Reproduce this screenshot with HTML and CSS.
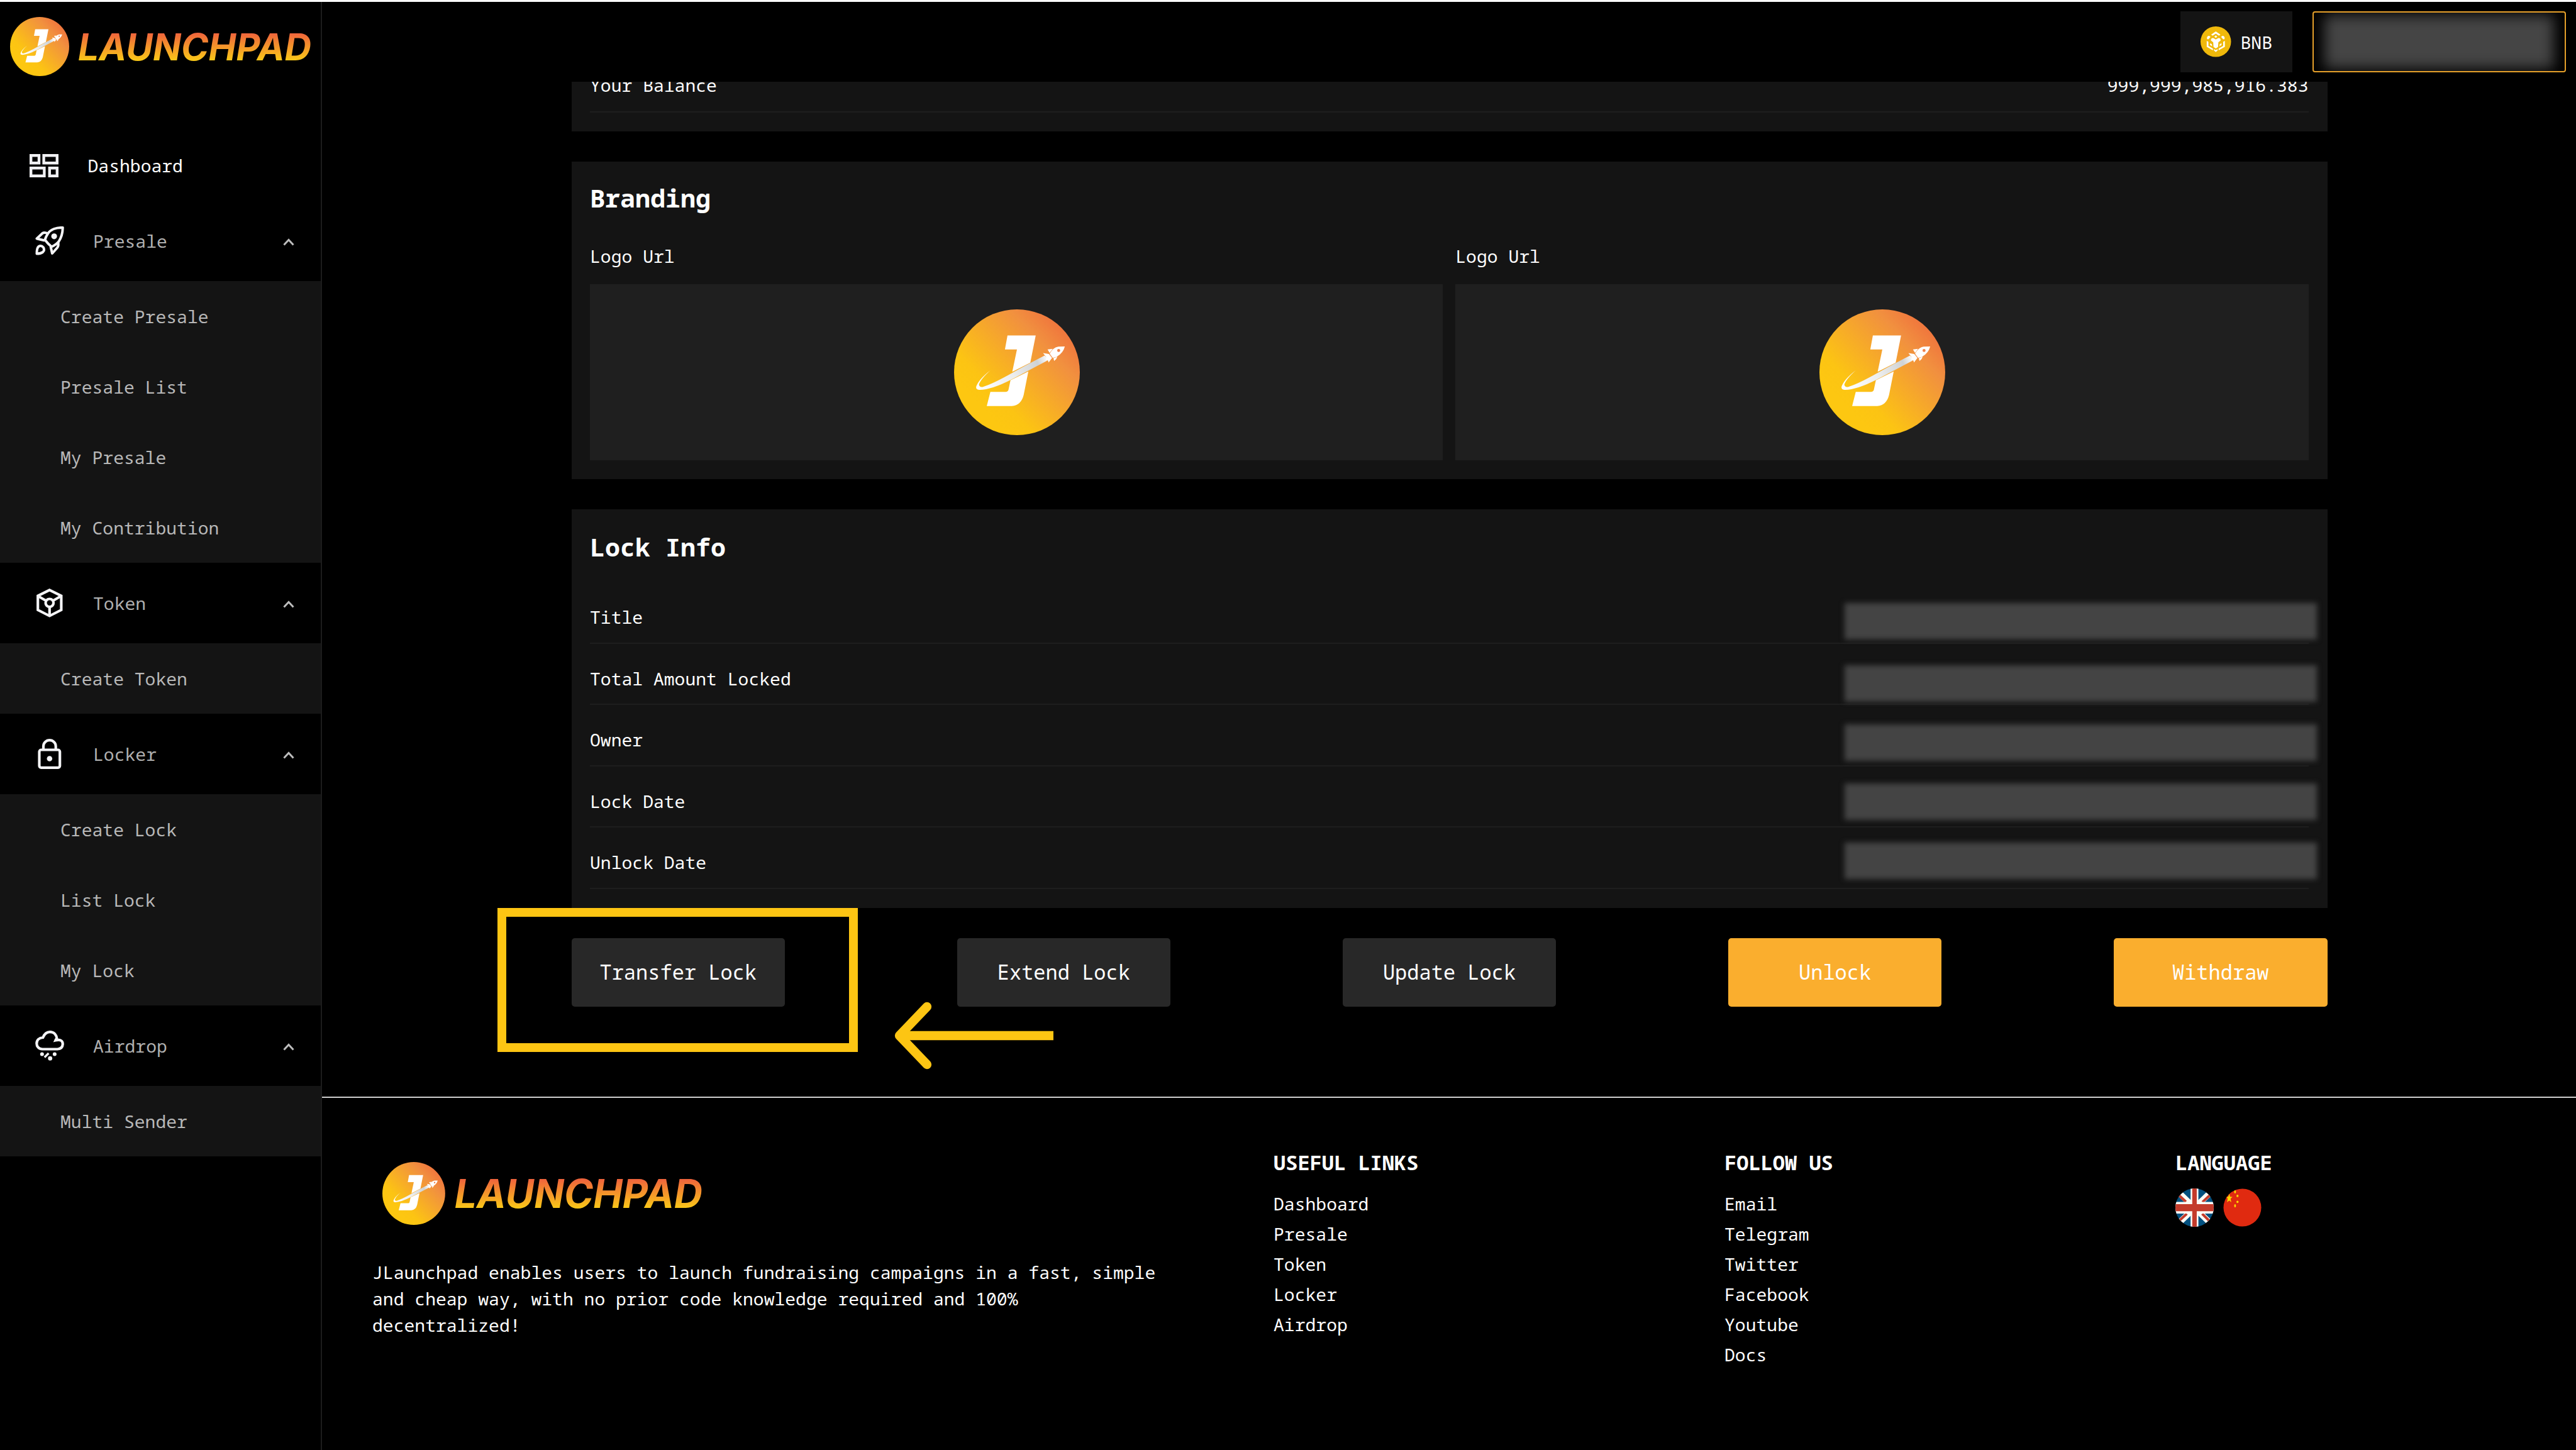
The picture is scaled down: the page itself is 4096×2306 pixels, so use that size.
FILE: index.html
```html
<!DOCTYPE html>
<html lang="en">
<head>
<meta charset="utf-8">
<title>JLaunchpad - Lock Info</title>
<link rel="stylesheet" href="styles.css">
</head>
<body>
<svg class="defs" width="0" height="0" aria-hidden="true">
  <defs>
    <linearGradient id="coin" gradientUnits="userSpaceOnUse" x1="290" y1="760" x2="830" y2="250">
      <stop offset="0" stop-color="#fdc711"/><stop offset=".18" stop-color="#fcc413"/><stop offset=".8" stop-color="#f1903f"/><stop offset="1" stop-color="#f0783d"/>
    </linearGradient>
    <linearGradient id="trail" gradientUnits="userSpaceOnUse" x1="240" y1="600" x2="710" y2="400">
      <stop offset="0" stop-color="#fff"/><stop offset=".5" stop-color="#eceded"/><stop offset=".85" stop-color="#cfd2d4"/><stop offset="1" stop-color="#fff"/>
    </linearGradient>
    <linearGradient id="word" gradientUnits="userSpaceOnUse" x1="0" y1="26" x2="0" y2="69">
      <stop offset="0" stop-color="#ef643c"/><stop offset="1" stop-color="#fac818"/>
    </linearGradient>
    <symbol id="mark" viewBox="85 80 838 838">
      <circle cx="504" cy="499" r="419" fill="url(#coin)"/>
      <path fill="#fff" d="M441 254H629L593 435L473 496L504 347H424ZM461 552L580 494L549 650Q532 720 470 724H303L327 630H428Q444 630 448 614Z"/>
      <path fill="url(#trail)" d="M327 486Q246 548 232 597Q231 614 252 616Q330 618 470 546L702 424L712 410L688 388Q600 433 473 503Q340 578 275 597Q252 600 251 580Q262 545 327 486Z"/>
      <path fill="#fff" d="M823 327Q812 372 768 396L742 404L722 376Q742 335 780 328ZM708 347L742 343L722 370ZM747 406L773 395Q770 410 752 424ZM678 371L717 377L738 404L715 434L711 421L697 417L700 399Z"/>
      <circle cx="782" cy="354" r="10" fill="#f0814a"/>
      <path d="M720 376L742 405" stroke="#f0955a" stroke-width="4"/>
    </symbol>
    <symbol id="chevron" viewBox="0 0 18 12"><path d="M1.5 10.5L9 2.5L16.500 10.5" fill="none" stroke="#bdbdbd" stroke-width="3"/></symbol>
  </defs>
</svg>

<div class="app">
  <aside class="sidebar">
    <div class="sidebar-logo">
      <svg class="logo" viewBox="0 0 480 94">
        <use href="#mark" width="94" height="94"/>
        <text class="wordmark" x="108" y="69" textLength="371" lengthAdjust="spacingAndGlyphs">LAUNCHPAD</text>
      </svg>
    </div>
    <nav>
      <a class="nav-top">
        <svg width="46" height="37" viewBox="0 0 46 37"><g fill="none" stroke="#f0f0f3" stroke-width="4.400"><path d="M2.200 2.200H15V14.300H2.200ZM22.600 2.200H43.800V14.300H22.600ZM2.200 22.200H23.400V34.800H2.200ZM31.800 22.200H43.800V34.800H31.800Z"/></g></svg>
        <span>Dashboard</span>
      </a>
      <div class="nav-head">
        <svg class="ico" viewBox="-0.500 0 46 46"><g fill="none" stroke="#f4f4f6" stroke-width="4" stroke-linejoin="round"><path d="M43.300 2C33 1.600 24 5 20 11Q16 17 15 21.500Q20 28 25.500 32.500Q33 29 37 24Q43 15 43.300 2Z"/><path d="M20 11.500Q14 9 11 11L2 19.500L14.500 22.500"/><path d="M36 25.500Q37 31 34.500 34L26.500 43L24 32"/><path d="M2 43.500Q2 34 5 32Q9 29.500 12.500 33.500Q15 38 11.500 41Q8 43.500 2 43.500Z"/></g><circle cx="29.600" cy="15.800" r="4.600" fill="#f4f4f6"/></svg>
        <span>Presale</span><svg class="chev"><use href="#chevron"/></svg>
      </div>
      <ul><li>Create Presale</li><li>Presale List</li><li>My Presale</li><li>My Contribution</li></ul>
      <div class="nav-head">
        <svg class="ico" viewBox="-2 0 46 46"><g fill="none" stroke="#f4f4f6" stroke-width="4.200"><path d="M20.800 2.300L39.400 11.600V34L20.800 43.500L2.200 34V11.600Z"/><circle cx="20.800" cy="22.800" r="6.300"/><path d="M2.500 12L15.500 19.500M39 12L26 19.500M20.800 29V43"/></g></svg>
        <span>Token</span><svg class="chev"><use href="#chevron"/></svg>
      </div>
      <ul><li>Create Token</li></ul>
      <div class="nav-head">
        <svg class="ico tall" viewBox="-4.500 0 46 48"><g fill="none" stroke="#f4f4f6" stroke-width="4.200"><rect x="2" y="17.500" width="32.700" height="28.300" rx="3"/><path d="M8.500 17V11.700A9.850 9.600 0 0 1 28.200 11.700V17"/></g><circle cx="18.300" cy="31.500" r="4.300" fill="#f4f4f6"/></svg>
        <span>Locker</span><svg class="chev"><use href="#chevron"/></svg>
      </div>
      <ul><li>Create Lock</li><li>List Lock</li><li>My Lock</li></ul>
      <div class="nav-head">
        <svg class="ico tall" viewBox="-0.300 0 46 48"><path fill="none" stroke="#f4f4f6" stroke-width="4.200" d="M11 29.500C5 29 2 25 2 20.500C2 15 6 11.500 12 11C14.500 5 18 2.200 23 2.200C29.500 2.200 33.500 6.500 34.200 13.500Q33 13.200 32 15.500Q43.500 13 43.500 21.500Q43 29 35 29.500Z"/><g fill="#f4f4f6"><circle cx="10.500" cy="37.400" r="3"/><circle cx="30.600" cy="37.400" r="3"/><circle cx="23.400" cy="44.200" r="3.400"/></g><path d="M14.500 42.500L21 36" stroke="#f4f4f6" stroke-width="3.400"/></svg>
        <span>Airdrop</span><svg class="chev"><use href="#chevron"/></svg>
      </div>
      <ul><li>Multi Sender</li></ul>
    </nav>
  </aside>

  <div class="main">
    <header class="topbar">
      <div class="chain">
        <svg width="48.500" height="48.500" viewBox="49 56 202 202"><circle cx="150" cy="157" r="101" fill="#f0b90b"/>
          <g fill="#fff"><path d="M119 110L150 89L181 110L171 117L150 104L129 117Z"/><path d="M150 115L160 124L150 132L140 124Z"/><path d="M92 140V127Q97 117 108 119L115 126L101 141ZM208 140V127Q203 117 192 119L185 126L199 141Z"/><path d="M118 143Q121 131 133 133L150 142L167 133Q179 131 182 143V150L167 161L165 192L150 202L135 192L133 161L118 150Z"/><path d="M90 152L101 158V185L131 203V214L90 191ZM210 152L199 158V185L169 203V214L210 191Z"/><path d="M112 167L124 174L126 188L112 179ZM188 167L176 174L174 188L188 179Z"/><path d="M138 206L150 213L162 206V215L150 226L138 215Z"/></g></svg>
        <span>BNB</span>
      </div>
      <div class="wallet"><i></i></div>
    </header>

    <div class="viewport">
      <main class="content">
        <section class="card balance">
          <div class="row"><span>Your Balance</span><span>999,999,985,916.383</span></div>
        </section>

        <section class="card branding">
          <h2>Branding</h2>
          <div class="logos">
            <div><label>Logo Url</label><div class="logo-box"><svg width="200" height="200"><use href="#mark"/></svg></div></div>
            <div><label>Logo Url</label><div class="logo-box"><svg width="200" height="200"><use href="#mark"/></svg></div></div>
          </div>
        </section>

        <section class="card lock">
          <h2>Lock Info</h2>
          <div class="rows">
            <div class="row"><span>Title</span><i class="masked"></i></div>
            <div class="row"><span>Total Amount Locked</span><i class="masked"></i></div>
            <div class="row"><span>Owner</span><i class="masked"></i></div>
            <div class="row"><span>Lock Date</span><i class="masked"></i></div>
            <div class="row"><span>Unlock Date</span><i class="masked"></i></div>
          </div>
        </section>

        <div class="actions">
          <button>Transfer Lock</button>
          <button>Extend Lock</button>
          <button>Update Lock</button>
          <button class="primary">Unlock</button>
          <button class="primary">Withdraw</button>
          <div class="highlight"></div>
          <svg class="arrow" width="254" height="108" viewBox="0 0 254 108"><path d="M53 8L9 54L53 100" fill="none" stroke="#fdc513" stroke-width="14.300" stroke-linecap="round" stroke-linejoin="round"/><path d="M9 54H254" stroke="#fdc513" stroke-width="14.300"/></svg>
        </div>
      </main>

      <footer>
        <div class="about">
          <svg class="logo" viewBox="0 0 480 94">
            <use href="#mark" width="94" height="94"/>
            <text class="wordmark" x="108" y="69" textLength="371" lengthAdjust="spacingAndGlyphs">LAUNCHPAD</text>
          </svg>
          <p>JLaunchpad enables users to launch fundraising campaigns in a fast, simple and cheap way, with no prior code knowledge required and 100% decentralized!</p>
        </div>
        <div class="col"><h3>USEFUL LINKS</h3><a>Dashboard</a><a>Presale</a><a>Token</a><a>Locker</a><a>Airdrop</a></div>
        <div class="col"><h3>FOLLOW US</h3><a>Email</a><a>Telegram</a><a>Twitter</a><a>Facebook</a><a>Youtube</a><a>Docs</a></div>
        <div class="col"><h3>LANGUAGE</h3>
          <div class="flags">
            <svg width="61" height="61" viewBox="0 0 255 255"><clipPath id="round"><circle cx="127.500" cy="127.500" r="127.500"/></clipPath>
              <g clip-path="url(#round)"><path fill="#03507f" d="M0 0H255V255H0Z"/>
              <path d="M10 15L245 243M245 15L10 243" stroke="#fdfcf6" stroke-width="40"/>
              <path d="M20 42L70 89M235 40L180 91M20 220L76 168M235 225L178 168" stroke="#c43b2b" stroke-width="17"/>
              <path fill="#fdfcf6" d="M101 0H153V255H101ZM0 90H255V167H0Z"/>
              <path fill="#c43b2b" d="M112 0H142V255H112ZM0 105H255V152H0Z"/></g></svg>
            <svg width="61" height="61" viewBox="0 0 255 255"><circle cx="127.500" cy="127.500" r="125.500" fill="#e02a10"/>
              <g fill="#fcd500"><path d="M40 36L46 55L62 56L49 68L54 92L40 80L26 92L30 68L22 58L34 55Z"/><ellipse cx="79" cy="23" rx="6" ry="10"/><ellipse cx="95" cy="50" rx="7" ry="8"/><ellipse cx="95" cy="89" rx="7" ry="8"/><ellipse cx="79" cy="115" rx="6" ry="11"/></g></svg>
          </div>
        </div>
      </footer>
    </div>
  </div>
</div>
</body>
</html>
```
FILE: styles.css
```css
* { box-sizing: border-box; }

body {
  margin: 0;
  background: #000;
  color: #fff;
  font: 28.05px/42px "Noto Sans Mono", "DejaVu Sans Mono", monospace;
}

svg { display: block; flex: none; }
.defs { position: absolute; }
h2, h3, p, ul { margin: 0; padding: 0; }
ul { list-style: none; }

.app {
  display: flex;
  width: 4096px;
  height: 2306px;
  overflow: hidden;
  border-top: 3px solid #fff;
}

/* Sidebar */
.sidebar {
  flex: none;
  width: 512px;
  border-right: 2px solid #1c1c1c;
}
.sidebar-logo {
  height: 204px;
  padding: 24px 0 0 16px;
}
.sidebar-logo .logo { width: 480px; height: 94px; }
.wordmark {
  font: italic 700 59px Inter, sans-serif;
  fill: url(#word);
}
.nav-top {
  display: flex;
  align-items: center;
  gap: 46.5px;
  height: 112px;
  padding-left: 47px;
}
.nav-head {
  display: flex;
  align-items: center;
  height: 128px;
  padding: 0 42px 0 56px;
  color: #b0b0b0;
}
.nav-head span { flex: 1; margin-left: 46px; }
.ico { width: 46px; height: 46px; }
.ico.tall { height: 48px; }
.chev { width: 18px; height: 12px; margin-top: 3px; }
.nav-head + ul { background: #141414; }
.nav-head + ul li {
  height: 112px;
  padding-left: 96px;
  line-height: 112px;
  color: #b8b8b8;
}

/* Top bar */
.main { flex: 1; min-width: 0; }
.topbar {
  display: flex;
  justify-content: flex-end;
  gap: 32px;
  height: 127px;
  padding: 15px 16px 0 0;
}
.chain {
  display: flex;
  align-items: center;
  gap: 15px;
  width: 178px;
  height: 97px;
  padding-left: 32px;
  background: #141414;
}
.wallet {
  position: relative;
  width: 403px;
  height: 97px;
  border: 2px solid #e6a02a;
  border-radius: 4px;
  overflow: hidden;
}
.wallet i {
  position: absolute;
  inset: 4px 17px;
  background: #454545;
  filter: blur(11px);
}

/* Scrolled page */
.viewport { height: 2176px; overflow: hidden; }
.content {
  display: flex;
  flex-direction: column;
  gap: 48px;
  width: 2792px;
  margin-left: 396.5px;
}
.card {
  padding: 28px 30px 30px 29.5px;
  background: #141414;
}
.card h2 { font-size: 40px; line-height: 60px; }
.row {
  position: relative;
  display: flex;
  justify-content: space-between;
  height: 97.5px;
  padding-top: 34px;
  border-bottom: 2px solid #1e1e1e;
}
.balance {
  display: flow-root;
  height: 78.5px;
  padding-top: 0;
  overflow: hidden;
}
.balance .row { margin-top: -49px; padding-top: 33px; }
.branding { height: 505.5px; }
.logos {
  display: grid;
  grid-template-columns: 1fr 1fr;
  gap: 20px;
  margin-top: 41.5px;
}
.logos label { display: block; }
.logo-box {
  display: flex;
  align-items: center;
  justify-content: center;
  height: 279.5px;
  margin-top: 24px;
  padding-left: 1px;
  background: #1f1f1f;
}
.lock { height: 633.5px; padding-top: 30px; }
.rows { margin-top: 26px; }
.masked {
  position: absolute;
  top: 33px;
  right: -13px;
  width: 751px;
  height: 58px;
  background: #444;
  filter: blur(4px);
}
.row:nth-child(2) .masked { top: 34px; }
.row:nth-child(3) .masked { top: 30.5px; }
.row:nth-child(4) .masked { top: 27px; }
.row:nth-child(5) .masked { top: 24px; }

.actions {
  position: relative;
  display: flex;
  justify-content: space-between;
}
button {
  width: 339.5px;
  height: 109px;
  border: 0;
  border-radius: 5px;
  background: #282828;
  color: #fff;
  font: 32px/48px "Noto Sans Mono", "DejaVu Sans Mono", monospace;
}
button.primary { background: #faae2e; }
.highlight {
  position: absolute;
  top: -48px;
  left: -118px;
  width: 573px;
  height: 229px;
  border: 14.3px solid #fdc513;
}
.arrow { position: absolute; top: 101px; left: 512.5px; }

/* Footer */
footer {
  display: grid;
  grid-template-columns: 1433px 717px 717px 1fr;
  margin-top: 143.5px;
  padding: 78.5px 0 0 80px;
  border-top: 2px solid #d0d0d0;
}
.about .logo { width: 510px; height: 100px; margin: 23px 0 54.5px 16px; }
.about p { width: 1260px; }
.col { display: flex; flex-direction: column; line-height: 48px; }
.col h3 { margin-bottom: 17.5px; font-size: 32px; line-height: 48px; }
.flags { display: flex; gap: 15px; }
```
